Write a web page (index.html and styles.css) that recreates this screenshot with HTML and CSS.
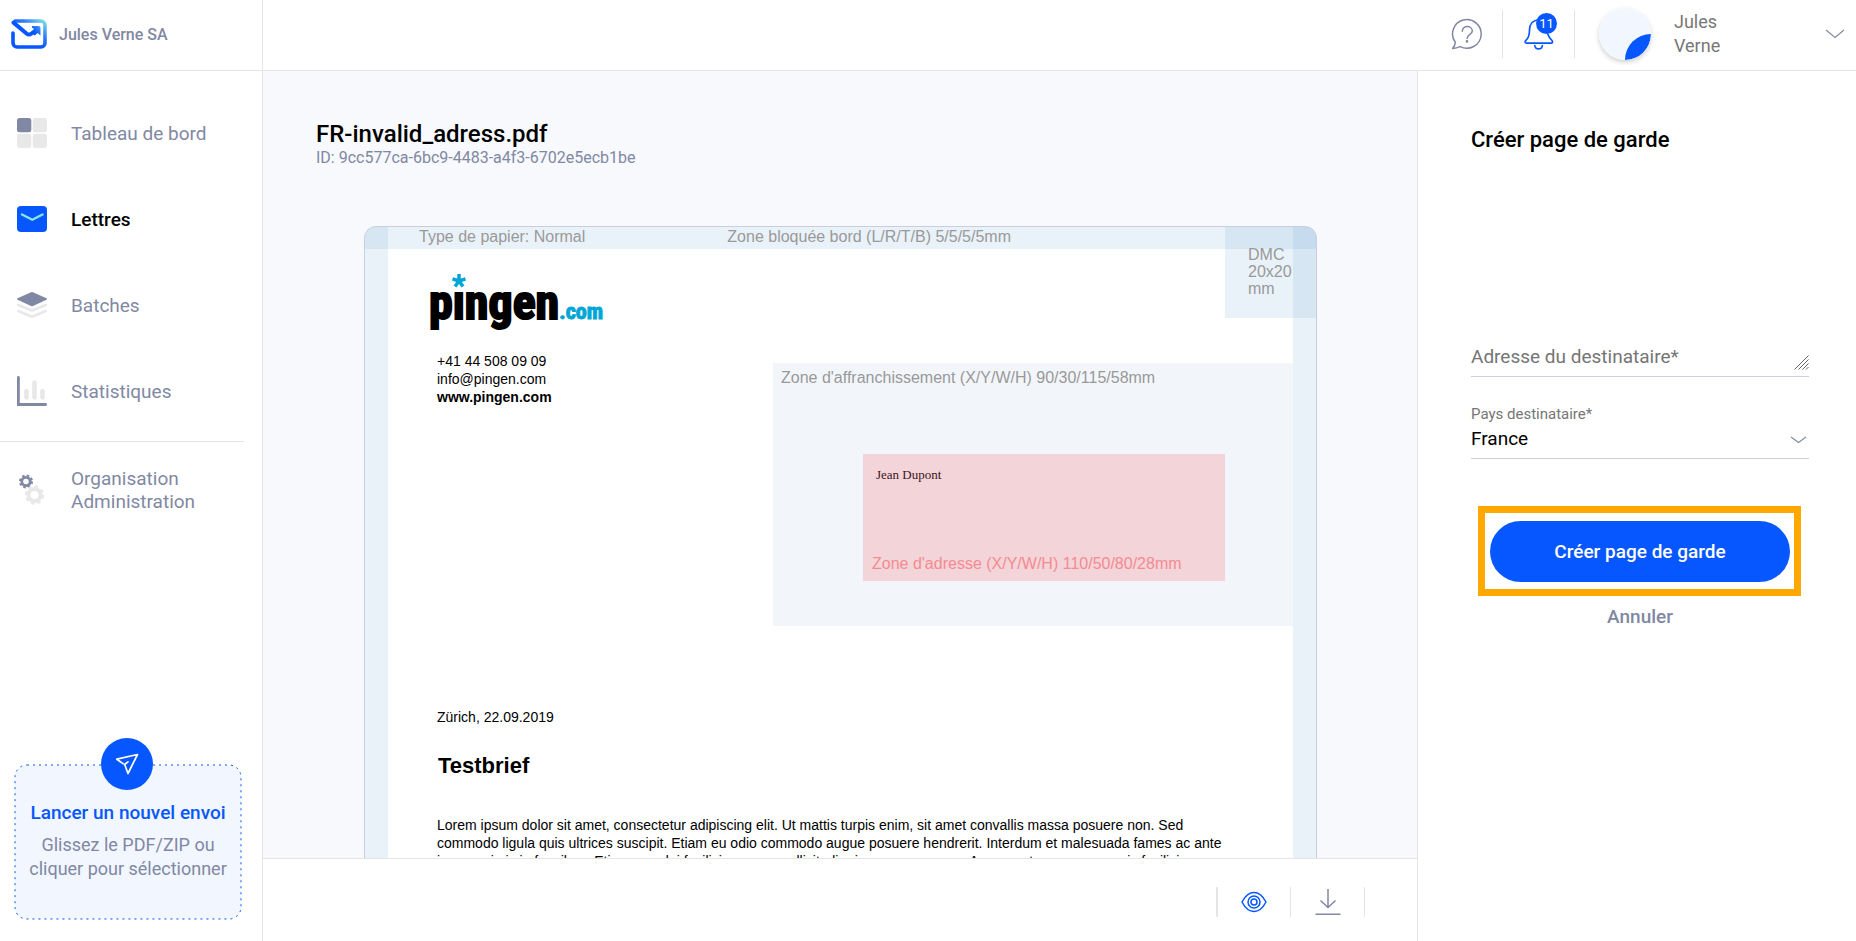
FILE: index.html
```html
<!DOCTYPE html>
<html lang="fr">
<head>
<meta charset="utf-8">
<title>Créer page de garde</title>
<meta name="viewport" content="width=device-width, initial-scale=1">
<link rel="stylesheet" href="styles.css">
</head>
<body>
<div class="app">
  <header class="topbar">
    <a class="brand" href="#">
      <svg class="brand-logo" viewBox="0 0 36 30" aria-hidden="true">
        <defs>
          <linearGradient id="brand-blue" x1="0.45" y1="0.6" x2="1" y2="0">
            <stop offset="0" stop-color="#0657ff"/>
            <stop offset="0.45" stop-color="#2f7df8"/>
            <stop offset="1" stop-color="#7fe0e6"/>
          </linearGradient>
          <linearGradient id="brand-arrow" x1="0" y1="1" x2="1" y2="0">
            <stop offset="0.3" stop-color="#0657ff"/>
            <stop offset="1" stop-color="#4d9cf0"/>
          </linearGradient>
        </defs>
        <path d="M2 14V24a4 4 0 0 0 4 4H30a4 4 0 0 0 4-4V6a4 4 0 0 0-4-4H4" fill="none" stroke="url(#brand-blue)" stroke-width="3.6" stroke-linecap="round"/>
        <path d="M2.500 3.600 15.500 14.500a4 4 0 0 0 5 0L25.500 11" fill="none" stroke="#0657ff" stroke-width="4" stroke-linecap="round"/>
        <path d="M21 7h6.500a2 2 0 0 1 2 2v7.500l-2.800-2.600-3 2.600-2.800-3.300 3-2.400-3-2.200z" fill="url(#brand-arrow)"/>
      </svg>
      <span>Jules Verne SA</span>
    </a>
    <div class="topbar-tools">
      <button class="tool" type="button" aria-label="Aide">
        <svg class="help-icon" viewBox="0 0 32 32" fill="none" stroke="#8188a3" stroke-width="1.500" stroke-linecap="round" stroke-linejoin="round">
          <path d="M4.300 24.300A14.300 14.300 0 1 1 9.300 28.600Q5.500 30 1.500 30.500 4.300 27.500 4.300 24.300z"/>
          <path d="M11.300 13.300c0-6.400 10-6 10-.3 0 3.500-5.200 3.200-5.200 7.500"/>
          <circle cx="16" cy="23.400" r=".6"/>
        </svg>
      </button>
      <button class="tool" type="button" aria-label="Notifications">
        <svg class="bell-icon" viewBox="0 0 30 32" fill="none" stroke="#0657ff" stroke-width="1.700" stroke-linecap="round">
          <path d="M14.500 2C8.500 2.200 5.500 6.500 5.500 12c0 5-1 8-3.200 9.800C.2 24 1.200 25.200 2.800 25.200h24c1.800 0 2.400-1.500.8-3.200-1.600-1.500-3-3.500-3.800-6"/>
          <path d="M10.800 27.500c.6 4.600 7 4.600 7.600 0"/>
        </svg>
        <span class="badge">11</span>
      </button>
      <button class="account" type="button">
        <svg class="avatar" viewBox="0 0 52 52" aria-hidden="true">
          <circle cx="26" cy="26" r="26" fill="#f1f6ff"/>
          <path d="M52 26A26 26 0 0 1 26 52 26 26 0 0 1 52 26z" fill="#0657ff"/>
        </svg>
        <span class="account-name">Jules<br>Verne</span>
        <svg class="chevron" viewBox="0 0 20 10" fill="none" stroke="#8188a3" stroke-width="1.100"><path d="M1 1l9 7.500L19 1"/></svg>
      </button>
    </div>
  </header>

  <aside class="sidebar">
    <nav class="nav">
      <a class="nav-item" href="#">
        <svg class="nav-icon" viewBox="0 0 30 30"><rect width="14.300" height="14.300" rx="2.500" fill="#8188a3"/><rect x="15.700" width="14.300" height="14.300" rx="2.500" fill="#e8e8e8"/><rect y="15.700" width="14.300" height="14.300" rx="2.500" fill="#e8e8e8"/><rect x="15.700" y="15.700" width="14.300" height="14.300" rx="2.500" fill="#e8e8e8"/></svg>
        <span>Tableau de bord</span>
      </a>
      <a class="nav-item nav-item-active" href="#" aria-current="page">
        <svg class="nav-icon" viewBox="0 0 30 30"><rect y="2" width="30" height="26" rx="4" fill="#0657ff"/><path d="M5 10.500l10.300 5.300L25.500 10.500" fill="none" stroke="#8fe3de" stroke-width="2.400" stroke-linecap="round" stroke-linejoin="round"/></svg>
        <span>Lettres</span>
      </a>
      <a class="nav-item" href="#">
        <svg class="nav-icon" viewBox="0 0 30 30"><path d="M14 2.300q1-.5 2 0L29.500 8.300q1 .7 0 1.400L16 15.900q-1 .5-2 0L.5 9.700q-1-.7 0-1.400z" fill="#8188a3"/><g fill="none" stroke="#e8e8e8" stroke-width="2.600" stroke-linecap="round" stroke-linejoin="round"><path d="M1.300 15l13.700 5.500L28.700 15"/><path d="M1.300 21l13.700 5.700L28.700 21"/></g></svg>
        <span>Batches</span>
      </a>
      <a class="nav-item" href="#">
        <svg class="nav-icon" viewBox="0 0 30 30"><path d="M1.400 1.400V28.500H28.600" fill="none" stroke="#8188a3" stroke-width="2.800" stroke-linecap="round"/><path d="M9.500 15v6.500M17.500 6.500v15M25.500 15v6.500" stroke="#e8e8e8" stroke-width="4.600" stroke-linecap="round"/></svg>
        <span>Statistiques</span>
      </a>
      <hr class="nav-rule">
      <a class="nav-item" href="#">
        <svg class="nav-icon" viewBox="0 0 30 34"><g fill="none"><circle cx="9" cy="8.500" r="4.200" stroke="#8188a3" stroke-width="2.800"/><circle cx="9" cy="8.500" r="6" stroke="#8188a3" stroke-width="2" stroke-dasharray="2.500 2.212"/><circle cx="17.500" cy="22" r="6" stroke="#e8e8e8" stroke-width="4"/><circle cx="17.500" cy="22" r="8.700" stroke="#e8e8e8" stroke-width="2" stroke-dasharray="3.600 3.233"/></g></svg>
        <span>Organisation Administration</span>
      </a>
    </nav>
    <button class="dropzone" type="button">
      <svg class="dropzone-outline" aria-hidden="true"><rect x="1" y="1" width="100%" height="100%" rx="12" fill="#f1f6ff" stroke="#0657ff" stroke-width="1" stroke-dasharray="2 4"/></svg>
      <span class="dropzone-icon">
        <svg viewBox="0 0 24 24" fill="none" stroke="#fff" stroke-width="1.700" stroke-linejoin="round" stroke-linecap="round"><path d="M9.500 12.500 13 9.800M9.800 12.800 13 21.500 22.500 2.500 1.800 7.200 8 11.600"/></svg>
      </span>
      <strong class="dropzone-title">Lancer un nouvel envoi</strong>
      <span class="dropzone-text">Glissez le PDF/ZIP ou cliquer pour sélectionner</span>
    </button>
  </aside>

  <main class="viewer">
    <div class="viewer-scroll">
      <h1 class="file-name">FR-invalid_adress.pdf</h1>
      <p class="file-id">ID: 9cc577ca-6bc9-4483-a4f3-6702e5ecb1be</p>
      <article class="letter">
        <div class="zone zone-top"><span>Type de papier: Normal</span><span>Zone bloquée bord (L/R/T/B) 5/5/5/5mm</span></div>
        <div class="zone zone-left"></div>
        <div class="zone zone-right"></div>
        <div class="zone zone-dmc">DMC 20x20 mm</div>
        <div class="zone zone-franking">Zone d'affranchissement (X/Y/W/H) 90/30/115/58mm</div>
        <div class="zone zone-address"><span class="recipient">Jean Dupont</span><span>Zone d'adresse (X/Y/W/H) 110/50/80/28mm</span></div>
        <div class="letter-logo">
          <span class="logo-word">pingen</span><span class="logo-tld">.com</span>
          <svg class="logo-star" viewBox="0 0 18 18"><rect width="18" height="18" fill="#fff"/><path d="M9 8V1M9 8 2.500 5.800M9 8 15.500 5.800M9 8 5 13.500M9 8 13 13.500" stroke="#00a6d6" stroke-width="3.500"/></svg>
        </div>
        <address class="letter-contact">+41 44 508 09 09<br>info@pingen.com<br><b>www.pingen.com</b></address>
        <p class="letter-date">Zürich, 22.09.2019</p>
        <h2 class="letter-subject">Testbrief</h2>
        <p class="letter-body">Lorem ipsum dolor sit amet, consectetur adipiscing elit. Ut mattis turpis enim, sit amet convallis massa posuere non. Sed<br>commodo ligula quis ultrices suscipit. Etiam eu odio commodo augue posuere hendrerit. Interdum et malesuada fames ac ante<br>ipsum primis in faucibus. Etiam non dui facilisis, cursus sollicitudin risus, ornare nunc. Aenean at urna purus, quis facilisis</p>
      </article>
    </div>
    <footer class="viewer-bar">
      <button class="bar-button" type="button" aria-label="Aperçu">
        <svg viewBox="0 0 26 26" fill="none" stroke="#0657ff" stroke-width="1.500"><path d="M1 13Q6 3.500 13 3.500T25 13Q20 22.500 13 22.500T1 13z"/><circle cx="13" cy="13" r="6"/><circle cx="13" cy="13" r="3"/></svg>
      </button>
      <button class="bar-button" type="button" aria-label="Télécharger">
        <svg viewBox="0 0 26 26" fill="none" stroke="#8188a3" stroke-width="1.500"><path d="M13 0V18.500M5.500 11.500 13 18.500 20.500 11.500M.5 25.200H25.500"/></svg>
      </button>
    </footer>
  </main>

  <form class="panel">
    <h2 class="panel-title">Créer page de garde</h2>
    <div class="field">
      <textarea id="address" placeholder="Adresse du destinataire*" aria-label="Adresse du destinataire" rows="1"></textarea>
      <svg class="grip" viewBox="0 0 15 15" stroke="#666" stroke-width="1"><path d="M.5 14.500 14.500.5M4.500 14.500l10-10M8.500 14.500l6-6M12 14.500l2.500-2.500"/></svg>
    </div>
    <div class="field">
      <label for="country">Pays destinataire*</label>
      <select id="country"><option>France</option></select>
      <svg class="select-arrow" viewBox="0 0 17 8" fill="none" stroke="#8188a3" stroke-width="1.100"><path d="M1 1l7.500 5.500L16 1"/></svg>
    </div>
    <div class="highlight"><button class="primary" type="submit">Créer page de garde</button></div>
    <button class="cancel" type="button">Annuler</button>
  </form>
</div>
</body>
</html>
```
FILE: styles.css
```css
:root {
  --blue: #0657ff;
  --slate: #8188a3;
  --line: #e5e5e5;
}

* { box-sizing: border-box; }

body {
  margin: 0;
  font-family: Roboto, "Noto Sans", sans-serif;
  font-size: 19px;
  color: #000;
  background: #fff;
}

button, select, textarea { font: inherit; color: inherit; }

button {
  border: 0;
  padding: 0;
  background: none;
  cursor: pointer;
}

a { color: inherit; text-decoration: none; }
h1, h2, p { margin: 0; font-weight: 500; }
svg { display: block; flex: none; }

.app {
  display: grid;
  grid-template: 71px minmax(0, 1fr) / 263px minmax(0, 1fr) 439px;
  height: 100vh;
}

/* top bar */
.topbar {
  grid-column: 1 / -1;
  display: flex;
  justify-content: space-between;
  border-bottom: 1px solid var(--line);
}

.brand {
  display: flex;
  align-items: center;
  gap: 12px;
  width: 263px;
  padding: 0 0 2px 11px;
  border-right: 1px solid var(--line);
  font-size: 16px;
  font-weight: 500;
  color: var(--slate);
}

.brand-logo { width: 36px; height: 30px; }

.topbar-tools { display: flex; align-items: center; padding-bottom: 2px; }

.tool {
  position: relative;
  display: flex;
  align-items: center;
  justify-content: center;
  width: 72px;
  height: 48px;
  border-right: 1px solid var(--line);
}

.help-icon { width: 32px; height: 32px; }
.bell-icon { width: 30px; height: 32px; }

.badge {
  position: absolute;
  top: 3px;
  right: 17px;
  width: 21px;
  height: 21px;
  border-radius: 50%;
  background: var(--blue);
  color: #fff;
  font-size: 13px;
  line-height: 21px;
  text-align: center;
}

.account {
  display: flex;
  align-items: center;
  width: 281px;
  padding: 0 11px 0 24px;
  text-align: left;
}

.avatar {
  width: 52px;
  height: 52px;
  border-radius: 50%;
  box-shadow: 0 2px 5px rgba(0, 0, 0, 0.2);
}

.account-name {
  flex: 1;
  padding-left: 23px;
  font-size: 18px;
  line-height: 24px;
  color: #777;
}

.chevron { width: 20px; height: 10px; }

/* sidebar */
.sidebar {
  display: flex;
  flex-direction: column;
  justify-content: space-between;
  padding: 19px 20px 21px 14px;
  border-right: 1px solid var(--line);
}

.nav { margin-right: -16px; }

.nav-item {
  display: flex;
  align-items: center;
  gap: 24px;
  height: 86px;
  padding: 0 40px 0 3px;
  line-height: 23px;
  color: var(--slate);
}

.nav-item-active { color: #000; font-weight: 500; }
.nav-icon { width: 30px; height: 34px; }

.nav-rule {
  height: 1px;
  margin: 7px 14px 5px -14px;
  border: 0;
  background: var(--line);
}

.dropzone {
  position: relative;
  display: flex;
  flex-direction: column;
  align-items: center;
  padding: 36px 4px 39px;
}

/* the outline is one pixel short of the box on each side */
.dropzone-outline {
  position: absolute;
  inset: 0 2px 2px 0;
  width: calc(100% - 2px);
  height: calc(100% - 2px);
  overflow: visible;
}

.dropzone-icon {
  position: absolute;
  top: -26px;
  left: 50%;
  display: grid;
  place-items: center;
  width: 52px;
  height: 52px;
  margin-left: -27px;
  border-radius: 50%;
  background: var(--blue);
}

.dropzone-icon svg { width: 24px; height: 24px; }

.dropzone-title {
  position: relative;
  font-weight: 500;
  line-height: 26px;
  padding-bottom: 7px;
  color: var(--blue);
  white-space: nowrap;
}

.dropzone-text {
  position: relative;
  font-size: 18px;
  line-height: 24px;
  color: var(--slate);
}

/* document viewer */
.viewer {
  display: flex;
  flex-direction: column;
  min-height: 0;
}

.viewer-scroll {
  flex: 1;
  overflow: hidden;
  padding: 49px 100px 0 101px;
  background: #f7f9fd;
}

.file-name {
  margin-left: -48px;
  font-size: 24px;
  line-height: 28px;
}

.file-id {
  margin: 0 0 58px -48px;
  font-size: 16px;
  font-weight: 400;
  line-height: 20px;
  color: var(--slate);
}

.letter {
  position: relative;
  height: 1346px;
  padding: 46px 66px 0;
  overflow: hidden;
  border: 1px solid #cacfe0;
  border-radius: 12px;
  background: #fff;
  font-family: "Liberation Sans", Arial, sans-serif;
  font-size: 14px;
  line-height: 18px;
}

.zone {
  position: absolute;
  font-size: 16px;
  line-height: 17px;
  color: #999;
}

.zone-top {
  inset: 0 0 auto;
  display: flex;
  gap: 142px;
  height: 22px;
  padding: 1px 0 0 54px;
  background: rgba(62, 137, 203, 0.11);
}

.zone-left,
.zone-right {
  top: 0;
  bottom: 0;
  width: 23px;
  background: rgba(62, 137, 203, 0.11);
}

.zone-left { left: 0; }
.zone-right { right: 0; }

.zone-dmc {
  top: 0;
  right: 0;
  width: 91px;
  height: 91px;
  padding: 19px 22px 0 23px;
  background: rgba(62, 137, 203, 0.11);
}

.zone-franking {
  top: 136px;
  right: 23px;
  width: 520px;
  height: 263px;
  padding: 6px 8px;
  background: #f2f6fb;
}

.zone-address {
  top: 227px;
  right: 91px;
  display: flex;
  flex-direction: column;
  justify-content: space-between;
  width: 362px;
  height: 127px;
  padding: 12px 9px 9px;
  background: #f3d4d9;
  color: #f38b92;
}

.recipient {
  padding-left: 4px;
  font-family: "Liberation Serif", "Times New Roman", serif;
  font-size: 13px;
  color: #3a1519;
}

.letter-logo {
  position: relative;
  display: flex;
  align-items: baseline;
  height: 79px;
  margin-left: -2px;
  font-family: "Liberation Sans Narrow", "Roboto Condensed", "DejaVu Sans Condensed", sans-serif;
  font-weight: 700;
  line-height: 60px;
}

.logo-word { font-size: 48px; -webkit-text-stroke: 2px #000; }
.logo-tld { font-size: 22px; color: #00a6d6; -webkit-text-stroke: 1px #00a6d6; }

.logo-star {
  position: absolute;
  top: 0;
  left: 21px;
  width: 18px;
  height: 18px;
}

.letter-contact,
.letter-date,
.letter-body { padding-left: 6px; }

.letter-contact { font-style: normal; }
.letter-date { padding-top: 302px; font-weight: 400; }

.letter-subject {
  padding: 28px 0 38px 7px;
  font-size: 22px;
  font-weight: 700;
  line-height: 24px;
}

.letter-body { font-weight: 400; white-space: nowrap; }

.viewer-bar {
  display: flex;
  align-items: center;
  justify-content: flex-end;
  height: 83px;
  padding: 3px 52px 0 0;
  border-top: 1px solid var(--line);
}

.bar-button {
  display: grid;
  place-items: center;
  width: 74px;
  height: 30px;
  border-right: 1px solid var(--line);
}

.bar-button:first-child { width: 75px; border-left: 2px solid var(--line); }
.bar-button svg { width: 26px; height: 26px; }

/* cover page form */
.panel {
  padding: 55px 47px 0 53px;
  border-left: 1px solid var(--line);
}

.panel-title {
  font-size: 22px;
  line-height: 28px;
  margin-bottom: 187px;
}

.field {
  position: relative;
  border-bottom: 1px solid #cfcde0;
  margin-bottom: 28px;
}

.field textarea,
.field select {
  display: block;
  width: 100%;
  padding: 0;
  border: 0;
  outline: 0;
  background: none;
  appearance: none;
  resize: none;
  overflow: hidden;
}

.field textarea { height: 35px; line-height: 32px; }
.field textarea::placeholder { color: #757575; opacity: 1; }
.field label { display: block; font-size: 15px; line-height: 18px; color: #757575; }
.field select { height: 35px; padding-bottom: 4px; }

.grip {
  position: absolute;
  right: 0;
  bottom: 6px;
  width: 15px;
  height: 15px;
}

.select-arrow {
  position: absolute;
  right: 2px;
  bottom: 14px;
  width: 17px;
  height: 8px;
}

.highlight {
  margin: 47px 8px 0 7px;
  padding: 8px 4px 7px 5px;
  border: 7px solid #ffa800;
}

.primary {
  display: block;
  width: 100%;
  height: 61px;
  border-radius: 31px;
  background: var(--blue);
  color: #fff;
  font-weight: 500;
}

.cancel {
  display: block;
  margin: 8px auto 0;
  line-height: 26px;
  font-weight: 500;
  color: var(--slate);
}
```
